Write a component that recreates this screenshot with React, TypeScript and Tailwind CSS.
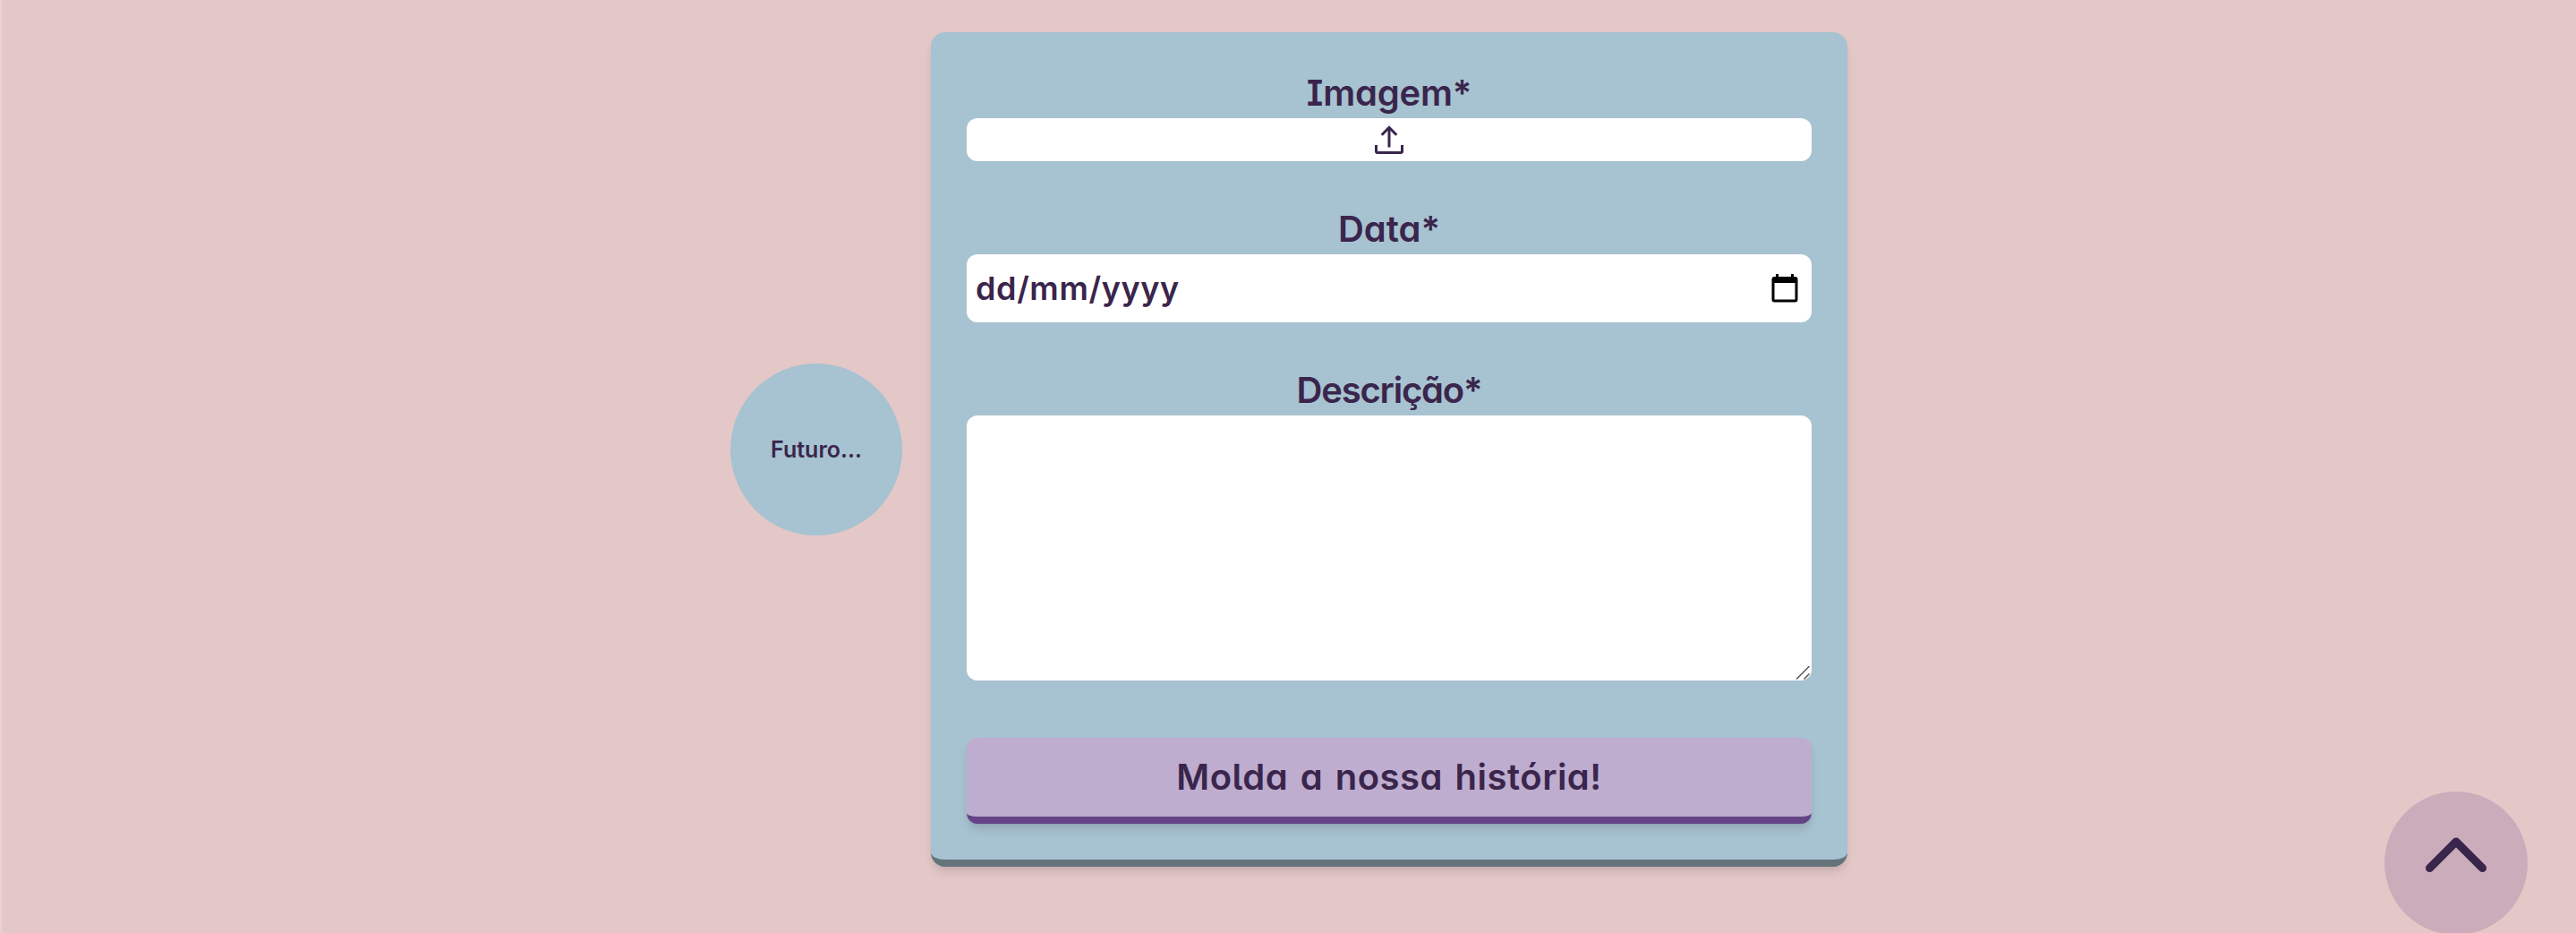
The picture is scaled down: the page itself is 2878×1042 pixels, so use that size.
import type { ReactNode } from "react";

function Label({ children, className }: { children: ReactNode; className: string }) {
  return <span className={`block h-14 text-center text-[40px] leading-[56px] font-semibold ${className}`}>{children}</span>;
}

function UploadIcon() {
  return (
    <svg className="h-8 w-8" viewBox="0 0 32 32" fill="none" stroke="currentColor" strokeWidth="3">
      <path d="M1.5 22v7a1.500 1.500 0 0 0 1.500 1.500h26a1.500 1.500 0 0 0 1.500-1.500v-7" />
      <path d="M16 24.500V2.500" />
      <path d="M7.700 10.700 16 2.400l8.300 8.300" />
    </svg>
  );
}

function CalendarIcon() {
  return (
    <svg className="h-8 w-[30px]" viewBox="0 0 30 32">
      <path
        fill="#000"
        fillRule="evenodd"
        d="M5 0h3v3h14V0h3v3h1.500a3 3 0 0 1 3 3v22.500a3 3 0 0 1-3 3h-23a3 3 0 0 1-3-3V6a3 3 0 0 1 3-3H5zM3.500 10v18.500h23V10z"
      />
    </svg>
  );
}

function ResizeGrip() {
  return (
    <svg className="absolute right-0.5 bottom-px h-[15px] w-[15px]" viewBox="0 0 15 15" stroke="#555" strokeWidth="1.5">
      <path d="M0 14.500 14.500 0M8.500 14.500 14.500 8.500" />
    </svg>
  );
}

export default function App() {
  return (
    <main className="relative flex h-[1042px] w-full items-start justify-center gap-8 overflow-hidden border-l-2 border-[#e8d2d2] bg-[#e4c8c8] pt-9 font-['Inter',sans-serif] text-[#3a254c] [font-feature-settings:'cv11','cv08','cv05']">
      <div className="flex h-[932px] items-center">
        <div className="flex h-48 w-48 items-center justify-center rounded-full bg-[#a7c2d0]">
          <span className="pt-0.5 text-[25px] font-semibold">Futuro...</span>
        </div>
      </div>

      <form className="flex h-[932px] w-[1024px] flex-col gap-12 rounded-2xl border-b-8 border-[#65737b] bg-[#a7c2d0] p-10 shadow-[0_8px_12px_-2px_rgba(0,0,0,0.1),0_4px_8px_-4px_rgba(0,0,0,0.1)]">
        <div>
          <Label className="tracking-[-0.2px]">Imagem*</Label>
          <div className="flex h-12 items-center justify-center rounded-xl bg-white">
            <UploadIcon />
          </div>
        </div>

        <div>
          <Label className="tracking-[0px]">Data*</Label>
          <div className="flex h-[76px] items-center justify-between rounded-xl bg-white pr-[15px] pl-[10px]">
            <span className="pb-px text-[36px] leading-[54px] font-semibold tracking-[0.6px]">dd/mm/yyyy</span>
            <CalendarIcon />
          </div>
        </div>

        <div>
          <Label className="tracking-[-1.2px]">Descrição*</Label>
          <div className="relative h-[296px] rounded-xl bg-white">
            <ResizeGrip />
          </div>
        </div>

        <button
          type="button"
          className="mt-4 h-24 shrink-0 rounded-xl border-b-8 border-[#644486] bg-[#beadcf] text-[40px] leading-[56px] font-semibold tracking-[0.5px] [word-spacing:3px] shadow-[0_8px_12px_-2px_rgba(0,0,0,0.1),0_4px_8px_-4px_rgba(0,0,0,0.1)]"
        >
          Molda a nossa história!
        </button>
      </form>

      <button
        type="button"
        aria-label="Voltar ao topo"
        className="absolute right-[54px] -bottom-0.5 flex h-40 w-40 justify-center rounded-full bg-[#caacbb] pt-[50px]"
      >
        <svg className="h-[42px] w-[70px]" viewBox="0 0 70 42" fill="none" stroke="currentColor" strokeWidth="9" strokeLinecap="round" strokeLinejoin="round">
          <path d="M5.500 35.500 35 6l29.500 29.500" />
        </svg>
      </button>
    </main>
  );
}
